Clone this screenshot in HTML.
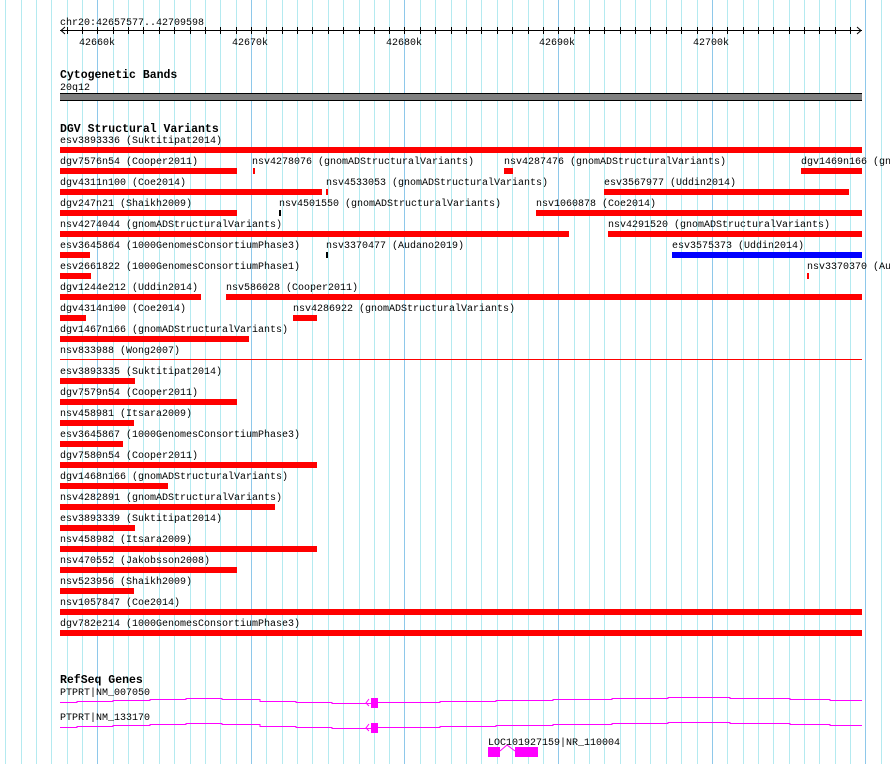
<!DOCTYPE html>
<html><head><meta charset="utf-8"><style>
html,body{margin:0;padding:0;background:#fff;width:890px;height:764px;overflow:hidden}
svg text{font-family:"Liberation Mono",monospace;font-size:10px;fill:#000}
svg text.b{font-weight:bold;font-size:11.5px}
</style></head><body>
<svg width="890" height="764" xmlns="http://www.w3.org/2000/svg">
<path stroke="#b4eaf0" stroke-width="1" fill="none" d="M5.5,0V764M21.5,0V764M36.5,0V764M51.5,0V764M67.5,0V764M82.5,0V764M113.5,0V764M128.5,0V764M143.5,0V764M159.5,0V764M174.5,0V764M190.5,0V764M205.5,0V764M220.5,0V764M236.5,0V764M266.5,0V764M282.5,0V764M297.5,0V764M312.5,0V764M328.5,0V764M343.5,0V764M359.5,0V764M374.5,0V764M389.5,0V764M420.5,0V764M435.5,0V764M451.5,0V764M466.5,0V764M481.5,0V764M497.5,0V764M512.5,0V764M528.5,0V764M543.5,0V764M574.5,0V764M589.5,0V764M604.5,0V764M620.5,0V764M635.5,0V764M650.5,0V764M666.5,0V764M681.5,0V764M697.5,0V764M727.5,0V764M743.5,0V764M758.5,0V764M773.5,0V764M789.5,0V764M804.5,0V764M819.5,0V764M835.5,0V764M850.5,0V764M881.5,0V764"/>
<path stroke="#8ec8ea" stroke-width="1" fill="none" d="M97.5,0V764M251.5,0V764M404.5,0V764M558.5,0V764M712.5,0V764M865.5,0V764"/>
<!-- ruler -->
<text x="60" y="25">chr20:42657577..42709598</text>
<rect x="60" y="30" width="802" height="1" fill="#000"/>
<path stroke="#000" stroke-width="1" fill="none" d="M67.5,27V34M82.5,27V34M97.5,27V34M113.5,27V34M128.5,27V34M143.5,27V34M159.5,27V34M174.5,27V34M190.5,27V34M205.5,27V34M220.5,27V34M236.5,27V34M251.5,27V34M266.5,27V34M282.5,27V34M297.5,27V34M312.5,27V34M328.5,27V34M343.5,27V34M359.5,27V34M374.5,27V34M389.5,27V34M404.5,27V34M420.5,27V34M435.5,27V34M451.5,27V34M466.5,27V34M481.5,27V34M497.5,27V34M512.5,27V34M528.5,27V34M543.5,27V34M558.5,27V34M574.5,27V34M589.5,27V34M604.5,27V34M620.5,27V34M635.5,27V34M650.5,27V34M666.5,27V34M681.5,27V34M697.5,27V34M712.5,27V34M727.5,27V34M743.5,27V34M758.5,27V34M773.5,27V34M789.5,27V34M804.5,27V34M819.5,27V34M835.5,27V34M850.5,27V34"/>
<path d="M65,27 L61,30.5 L65,34 M857,27 L861,30.5 L857,34" stroke="#000" fill="none"/>
<text x="79" y="45">42660k</text><text x="232" y="45">42670k</text><text x="386" y="45">42680k</text><text x="539" y="45">42690k</text><text x="693" y="45">42700k</text>
<!-- cyto -->
<text class="b" x="60" y="78">Cytogenetic Bands</text>
<text x="60" y="90">20q12</text>
<rect x="60" y="93" width="802" height="8" fill="#000"/>
<rect x="60" y="94" width="802" height="6" fill="#808080"/>
<!-- DGV -->
<text class="b" x="60" y="132">DGV Structural Variants</text>
<g fill="#f00">
<rect x="60" y="147" width="802" height="6"/>
<rect x="60" y="168" width="177" height="6"/><rect x="253" y="168" width="2" height="6"/><rect x="504" y="168" width="9" height="6"/><rect x="801" y="168" width="61" height="6"/>
<rect x="60" y="189" width="262" height="6"/><rect x="326" y="189" width="2" height="6"/><rect x="604" y="189" width="245" height="6"/>
<rect x="60" y="210" width="177" height="6"/><rect x="536" y="210" width="326" height="6"/>
<rect x="60" y="231" width="509" height="6"/><rect x="608" y="231" width="254" height="6"/>
<rect x="60" y="252" width="30" height="6"/>
<rect x="60" y="273" width="31" height="6"/><rect x="807" y="273" width="2" height="6"/>
<rect x="60" y="294" width="141" height="6"/><rect x="226" y="294" width="636" height="6"/>
<rect x="60" y="315" width="26" height="6"/><rect x="293" y="315" width="24" height="6"/>
<rect x="60" y="336" width="189" height="6"/>
<rect x="60" y="359" width="802" height="1"/>
<rect x="60" y="378" width="75" height="6"/>
<rect x="60" y="399" width="177" height="6"/>
<rect x="60" y="420" width="74" height="6"/>
<rect x="60" y="441" width="63" height="6"/>
<rect x="60" y="462" width="257" height="6"/>
<rect x="60" y="483" width="108" height="6"/>
<rect x="60" y="504" width="215" height="6"/>
<rect x="60" y="525" width="75" height="6"/>
<rect x="60" y="546" width="257" height="6"/>
<rect x="60" y="567" width="177" height="6"/>
<rect x="60" y="588" width="74" height="6"/>
<rect x="60" y="609" width="802" height="6"/>
<rect x="60" y="630" width="802" height="6"/>
</g>
<rect x="279" y="210" width="2" height="6" fill="#000"/>
<rect x="326" y="252" width="2" height="6" fill="#000"/>
<rect x="672" y="252" width="190" height="6" fill="#00f"/>
<text x="60" y="143">esv3893336 (Suktitipat2014)</text>
<text x="60" y="164">dgv7576n54 (Cooper2011)</text><text x="252" y="164">nsv4278076 (gnomADStructuralVariants)</text><text x="504" y="164">nsv4287476 (gnomADStructuralVariants)</text><text x="801" y="164">dgv1469n166 (gn</text>
<text x="60" y="185">dgv4311n100 (Coe2014)</text><text x="326" y="185">nsv4533053 (gnomADStructuralVariants)</text><text x="604" y="185">esv3567977 (Uddin2014)</text>
<text x="60" y="206">dgv247n21 (Shaikh2009)</text><text x="279" y="206">nsv4501550 (gnomADStructuralVariants)</text><text x="536" y="206">nsv1060878 (Coe2014)</text>
<text x="60" y="227">nsv4274044 (gnomADStructuralVariants)</text><text x="608" y="227">nsv4291520 (gnomADStructuralVariants)</text>
<text x="60" y="248">esv3645864 (1000GenomesConsortiumPhase3)</text><text x="326" y="248">nsv3370477 (Audano2019)</text><text x="672" y="248">esv3575373 (Uddin2014)</text>
<text x="60" y="269">esv2661822 (1000GenomesConsortiumPhase1)</text><text x="807" y="269">nsv3370370 (Au</text>
<text x="60" y="290">dgv1244e212 (Uddin2014)</text><text x="226" y="290">nsv586028 (Cooper2011)</text>
<text x="60" y="311">dgv4314n100 (Coe2014)</text><text x="293" y="311">nsv4286922 (gnomADStructuralVariants)</text>
<text x="60" y="332">dgv1467n166 (gnomADStructuralVariants)</text>
<text x="60" y="353">nsv833988 (Wong2007)</text>
<text x="60" y="374">esv3893335 (Suktitipat2014)</text>
<text x="60" y="395">dgv7579n54 (Cooper2011)</text>
<text x="60" y="416">nsv458981 (Itsara2009)</text>
<text x="60" y="437">esv3645867 (1000GenomesConsortiumPhase3)</text>
<text x="60" y="458">dgv7580n54 (Cooper2011)</text>
<text x="60" y="479">dgv1468n166 (gnomADStructuralVariants)</text>
<text x="60" y="500">nsv4282891 (gnomADStructuralVariants)</text>
<text x="60" y="521">esv3893339 (Suktitipat2014)</text>
<text x="60" y="542">nsv458982 (Itsara2009)</text>
<text x="60" y="563">nsv470552 (Jakobsson2008)</text>
<text x="60" y="584">nsv523956 (Shaikh2009)</text>
<text x="60" y="605">nsv1057847 (Coe2014)</text>
<text x="60" y="626">dgv782e214 (1000GenomesConsortiumPhase3)</text>
<!-- RefSeq -->
<text class="b" x="60" y="683">RefSeq Genes</text>
<text x="60" y="695">PTPRT|NM_007050</text>
<text x="60" y="720">PTPRT|NM_133170</text>
<g stroke="#f0f" fill="none" stroke-width="1">
<path d="M60,702.5 H77 V701.5 H113 V700.5 H150 V699.5 H186 V698.5 H222 V699.5 H260 V701.5 H296 V702.5 H332 V703.5 H372 M378,702.5 H440 V701.5 H496 V700.5 H553 V699.5 H612 V698.5 H668 V697.5 H730 V698.5 H790 V699.5 H830 V700.5 H862"/>
<path d="M60,727.5 H77 V726.5 H113 V725.5 H150 V724.5 H186 V723.5 H222 V724.5 H260 V726.5 H296 V727.5 H332 V728.5 H372 M378,727.5 H440 V726.5 H496 V725.5 H553 V724.5 H612 V723.5 H668 V722.5 H730 V723.5 H790 V724.5 H830 V725.5 H862"/>
<path d="M369,699 L366,703 L369,706 M369,724 L366,728 L369,731"/>
<path d="M500,751 L507,745 L515,751"/>
</g>
<g fill="#f0f">
<rect x="371" y="698" width="7" height="10"/>
<rect x="371" y="723" width="7" height="10"/>
<rect x="488" y="747" width="12" height="10"/>
<rect x="515" y="747" width="23" height="10"/>
</g>
<text x="488" y="745">LOC101927159|NR_110004</text>
</svg>
</body></html>
